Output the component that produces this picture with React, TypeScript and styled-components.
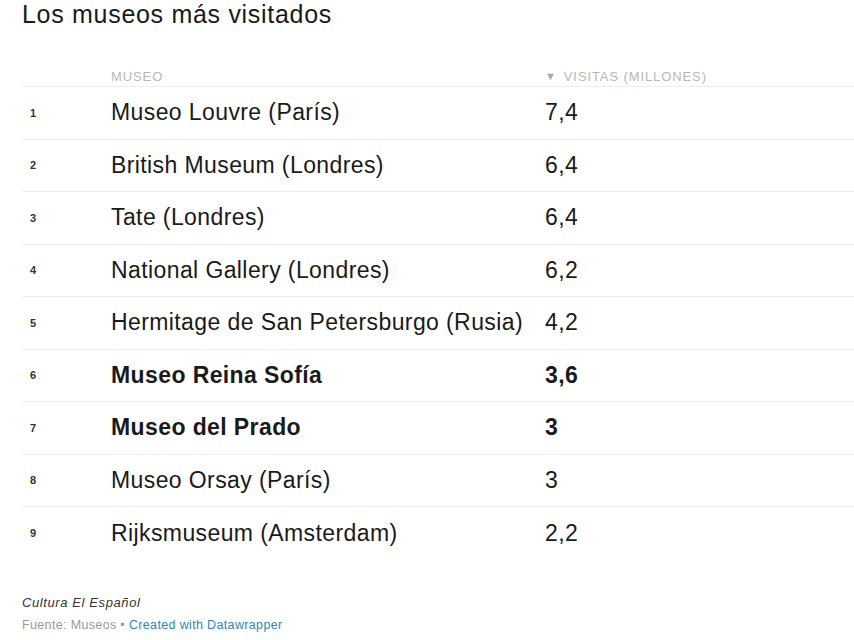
import styled, { createGlobalStyle } from "styled-components";

const GlobalStyle = createGlobalStyle`
    body {
        margin: 0;
        background: #ffffff;
        font-family: "Liberation Sans", Arial, sans-serif;
        color: #222222;
    }
`

type Museum = {
    rank: number;
    name: string;
    visits: string;
    highlight?: boolean;
};

const museums: Museum[] = [
    { rank: 1, name: "Museo Louvre (París)", visits: "7,4" },
    { rank: 2, name: "British Museum (Londres)", visits: "6,4" },
    { rank: 3, name: "Tate (Londres)", visits: "6,4" },
    { rank: 4, name: "National Gallery (Londres)", visits: "6,2" },
    { rank: 5, name: "Hermitage de San Petersburgo (Rusia)", visits: "4,2" },
    { rank: 6, name: "Museo Reina Sofía", visits: "3,6", highlight: true },
    { rank: 7, name: "Museo del Prado", visits: "3", highlight: true },
    { rank: 8, name: "Museo Orsay (París)", visits: "3" },
    { rank: 9, name: "Rijksmuseum (Amsterdam)", visits: "2,2" },
];

const App = () => {
    return (
        <Page>
            <GlobalStyle />
            <Title>Los museos más visitados</Title>
            <Table>
                <HeaderRow>
                    <span />
                    <HeaderCell>Museo</HeaderCell>
                    <HeaderCell><SortArrow>▼</SortArrow>Visitas (millones)</HeaderCell>
                </HeaderRow>
                {museums.map((m) => (
                    <Row key={m.rank}>
                        <Rank>{m.rank}</Rank>
                        <Cell $bold={m.highlight}>{m.name}</Cell>
                        <Cell $bold={m.highlight}>{m.visits}</Cell>
                    </Row>
                ))}
            </Table>
            <Footer>
                <Notes>Cultura El Español</Notes>
                <Source>
                    Fuente: Museos <Dot>•</Dot> <CreditLink href="#">Created with Datawrapper</CreditLink>
                </Source>
            </Footer>
        </Page>
    )
}

export default App;

const Page = styled.div`
    width: 854px;
    height: 640px;
    padding: 0 0 0 22px;
    box-sizing: border-box;
    overflow: hidden;
`

const Title = styled.h1`
    margin: 0;
    font-size: 25px;
    letter-spacing: 0.7px;
    font-weight: 400;
    line-height: 28px;
    color: #1a1a1a;
`

const Table = styled.div`
    margin-top: 38px;
`

const HeaderRow = styled.div`
    display: grid;
    grid-template-columns: 89px 434px 1fr;
    height: 20px;
    align-items: center;
    border-bottom: 1px solid #eeeeee;
`

const HeaderCell = styled.div`
    font-size: 13px;
    letter-spacing: 0.9px;
    text-transform: uppercase;
    color: #b8b8b8;
    display: flex;
    align-items: center;
`

const SortArrow = styled.span`
    font-size: 11px;
    margin-right: 7px;
    color: #a8a8a8;
`

const Row = styled.div`
    display: grid;
    grid-template-columns: 89px 434px 1fr;
    height: 52.5px;
    align-items: center;
    border-bottom: 1px solid #eeeeee;
    box-sizing: border-box;
    &:last-child {
        border-bottom: none;
    }
`

const Rank = styled.div`
    padding-left: 8px;
    font-size: 11px;
    font-weight: 700;
    color: #333333;
`

const Cell = styled.div<{ $bold?: boolean }>`
    font-size: 23px;
    letter-spacing: 0.4px;
    font-weight: ${(p) => (p.$bold ? 700 : 400)};
    color: #1a1a1a;
`

const Footer = styled.div`
    margin-top: 35px;
`

const Notes = styled.div`
    font-size: 13px;
    letter-spacing: 0.6px;
    font-style: italic;
    color: #333333;
    line-height: 16px;
`

const Source = styled.div`
    margin-top: 6px;
    font-size: 12.5px;
    letter-spacing: 0.35px;
    color: #999999;
    line-height: 16px;
`

const Dot = styled.span`
    color: #999999;
`

const CreditLink = styled.a`
    color: #2f86b5;
    text-decoration: none;
`
